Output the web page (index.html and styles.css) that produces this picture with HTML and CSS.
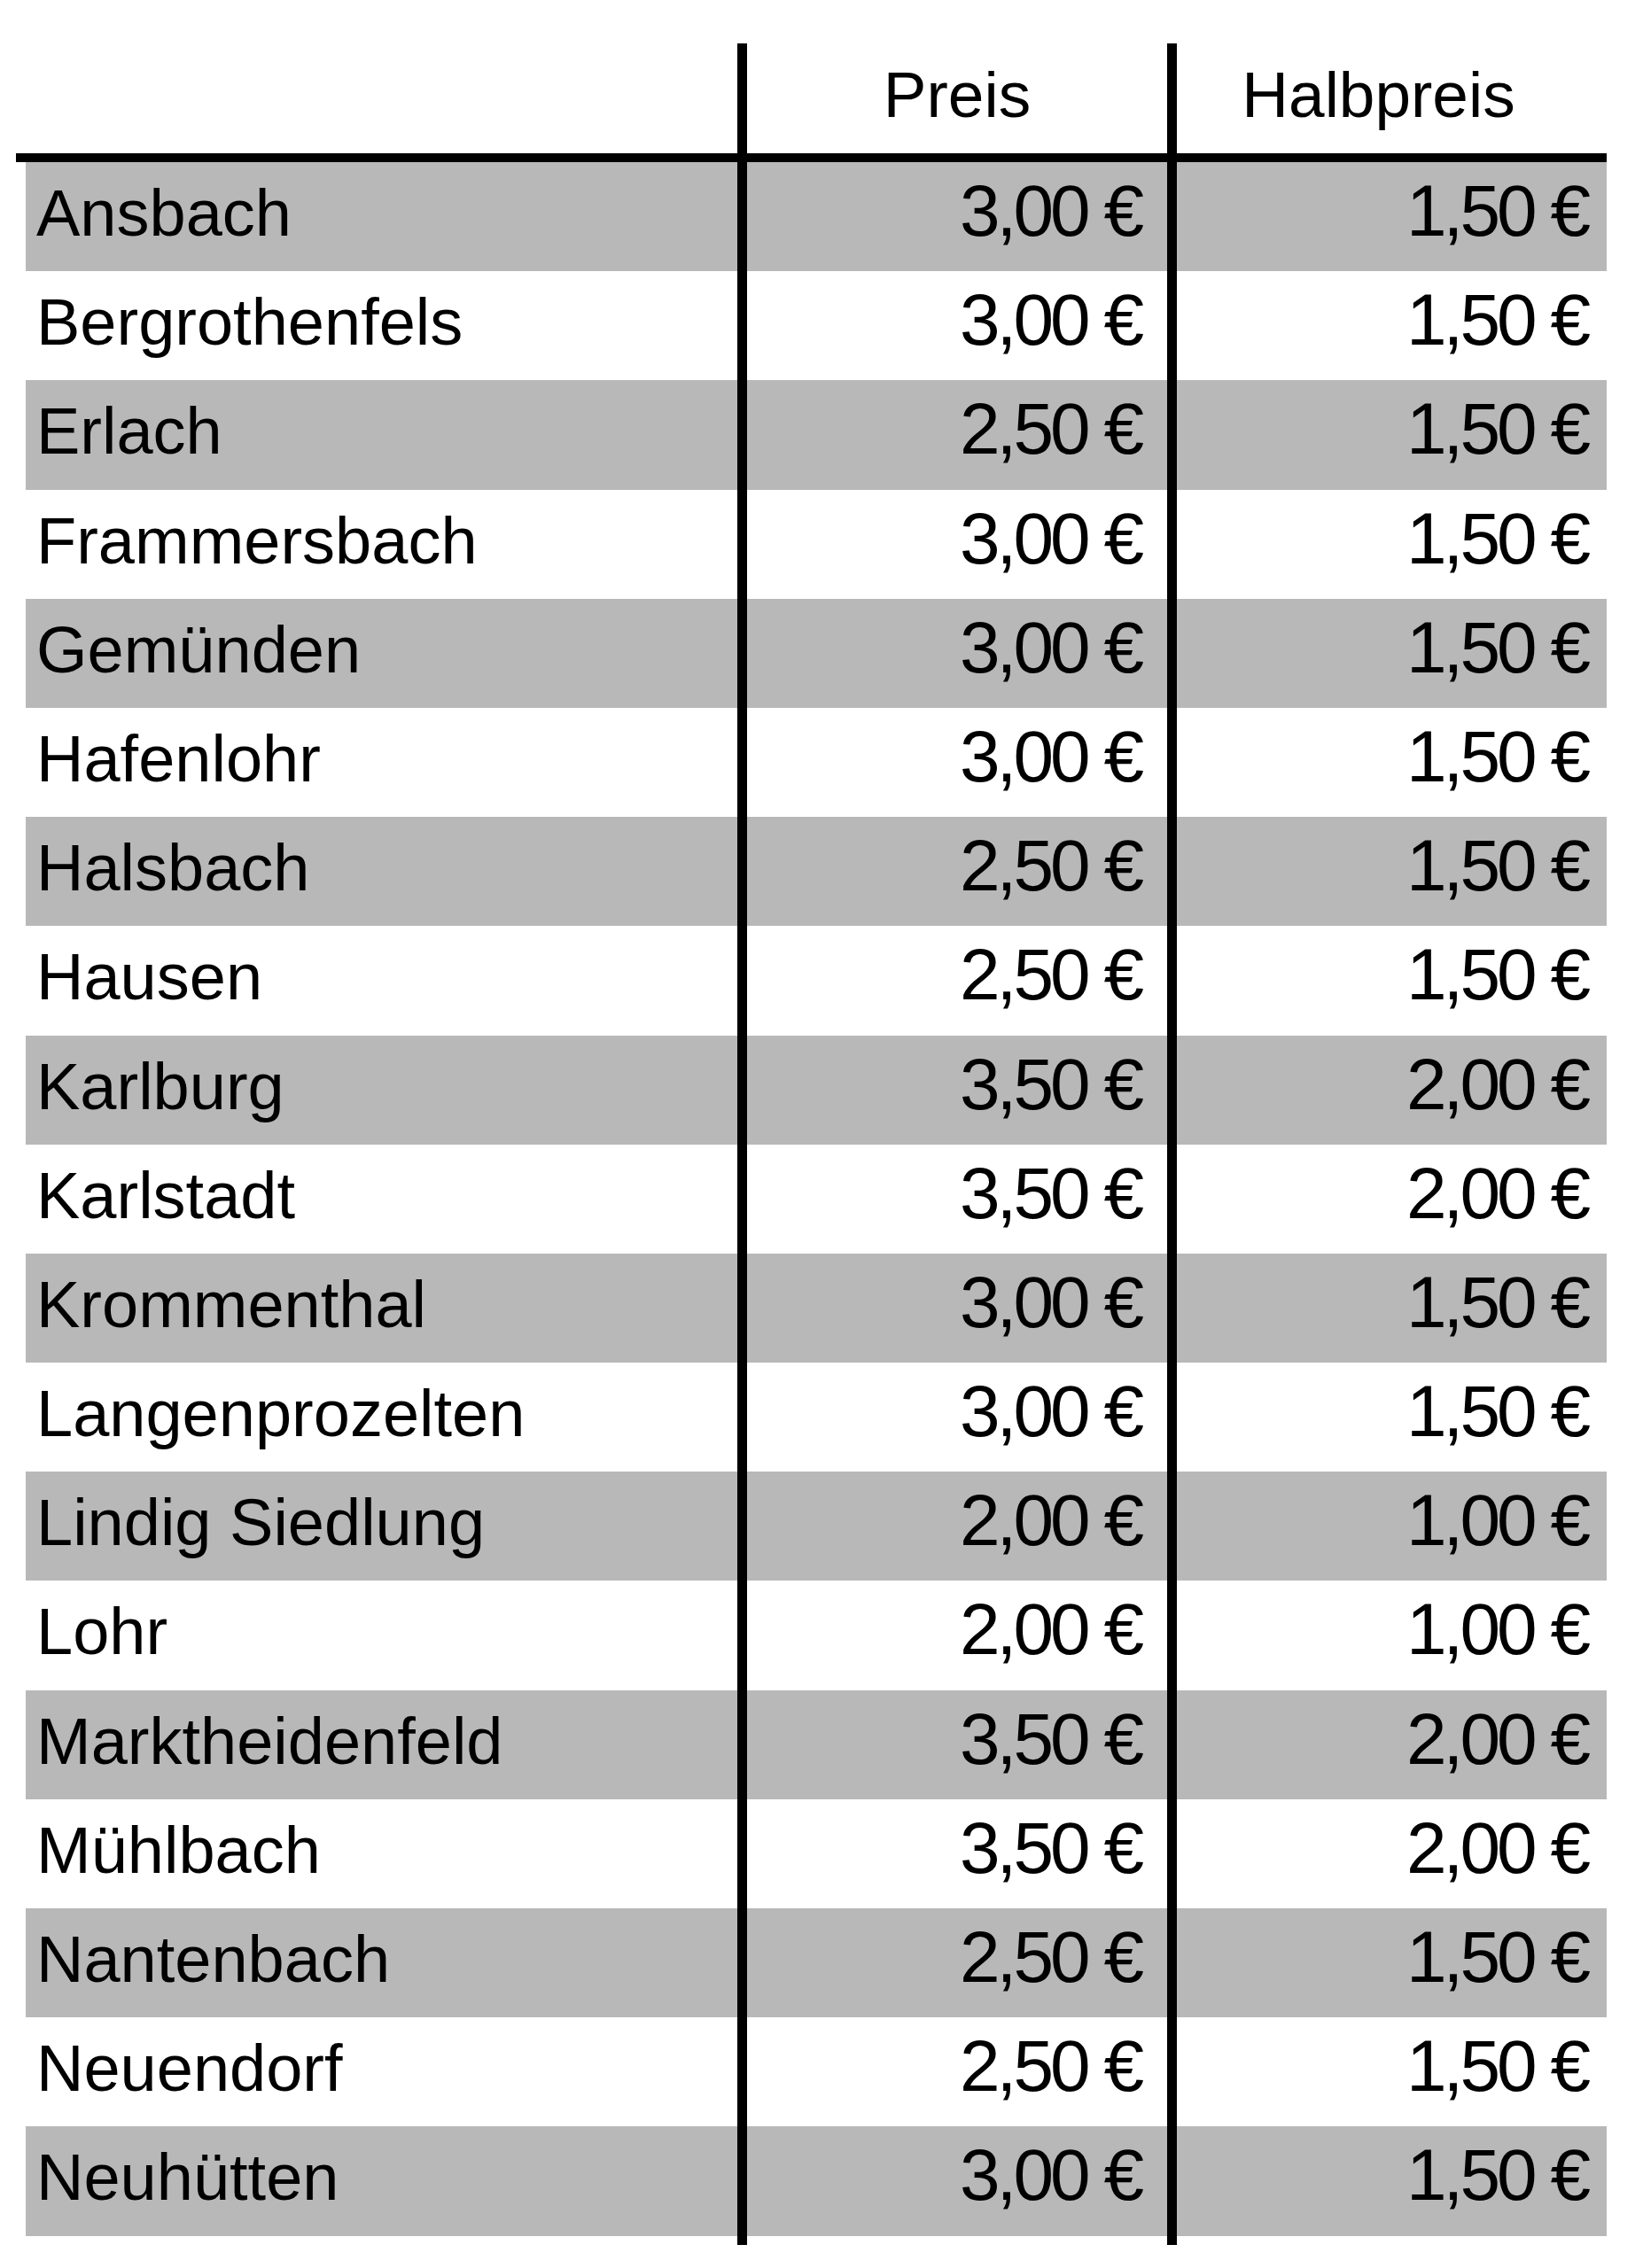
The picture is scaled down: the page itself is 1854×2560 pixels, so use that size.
FILE: index.html
```html
<!DOCTYPE html>
<html lang="de">
<head>
<meta charset="utf-8">
<title>Preise</title>
<link rel="stylesheet" href="styles.css">
</head>
<body>
<div class="table">
  <div class="head">
    <div class="cell name"></div>
    <div class="cell hcol hp">Preis</div>
    <div class="cell hcol hh">Halbpreis</div>
  </div>
  <div class="row gray"><div class="cell name">Ansbach</div><div class="cell price p1">3,00 €</div><div class="cell price p2">1,50 €</div></div>
  <div class="row"><div class="cell name">Bergrothenfels</div><div class="cell price p1">3,00 €</div><div class="cell price p2">1,50 €</div></div>
  <div class="row gray"><div class="cell name">Erlach</div><div class="cell price p1">2,50 €</div><div class="cell price p2">1,50 €</div></div>
  <div class="row"><div class="cell name">Frammersbach</div><div class="cell price p1">3,00 €</div><div class="cell price p2">1,50 €</div></div>
  <div class="row gray"><div class="cell name">Gemünden</div><div class="cell price p1">3,00 €</div><div class="cell price p2">1,50 €</div></div>
  <div class="row"><div class="cell name">Hafenlohr</div><div class="cell price p1">3,00 €</div><div class="cell price p2">1,50 €</div></div>
  <div class="row gray"><div class="cell name">Halsbach</div><div class="cell price p1">2,50 €</div><div class="cell price p2">1,50 €</div></div>
  <div class="row"><div class="cell name">Hausen</div><div class="cell price p1">2,50 €</div><div class="cell price p2">1,50 €</div></div>
  <div class="row gray"><div class="cell name">Karlburg</div><div class="cell price p1">3,50 €</div><div class="cell price p2">2,00 €</div></div>
  <div class="row"><div class="cell name">Karlstadt</div><div class="cell price p1">3,50 €</div><div class="cell price p2">2,00 €</div></div>
  <div class="row gray"><div class="cell name">Krommenthal</div><div class="cell price p1">3,00 €</div><div class="cell price p2">1,50 €</div></div>
  <div class="row"><div class="cell name">Langenprozelten</div><div class="cell price p1">3,00 €</div><div class="cell price p2">1,50 €</div></div>
  <div class="row gray"><div class="cell name">Lindig Siedlung</div><div class="cell price p1">2,00 €</div><div class="cell price p2">1,00 €</div></div>
  <div class="row"><div class="cell name">Lohr</div><div class="cell price p1">2,00 €</div><div class="cell price p2">1,00 €</div></div>
  <div class="row gray"><div class="cell name">Marktheidenfeld</div><div class="cell price p1">3,50 €</div><div class="cell price p2">2,00 €</div></div>
  <div class="row"><div class="cell name">Mühlbach</div><div class="cell price p1">3,50 €</div><div class="cell price p2">2,00 €</div></div>
  <div class="row gray"><div class="cell name">Nantenbach</div><div class="cell price p1">2,50 €</div><div class="cell price p2">1,50 €</div></div>
  <div class="row"><div class="cell name">Neuendorf</div><div class="cell price p1">2,50 €</div><div class="cell price p2">1,50 €</div></div>
  <div class="row gray"><div class="cell name">Neuhütten</div><div class="cell price p1">3,00 €</div><div class="cell price p2">1,50 €</div></div>
  <div class="row tail"><div class="cell"></div><div class="cell line"></div><div class="cell line"></div></div>
</div>
</body>
</html>
```
FILE: styles.css
```css
html, body {
  margin: 0;
  padding: 0;
  background: #ffffff;
}

body {
  font-family: "Liberation Sans", Arial, sans-serif;
  color: #000000;
}

.table {
  margin: 49px 0 0 18px;
  width: 1795px;
}

.head {
  display: grid;
  grid-template-columns: 814px 485px 496px;
  height: 124px;
  border-bottom: 10px solid #000;
}

.hcol {
  border-left: 11px solid #000;
  text-align: center;
  font-size: 73px;
  line-height: 115px;
  padding-bottom: 9px;
  white-space: nowrap;
}

.hh {
  padding-right: 30px;
}

.row {
  display: grid;
  grid-template-columns: 803px 485px 496px;
  margin-left: 11px;
  height: 123.2px;
}

.row.gray {
  background: #b8b8b8;
}

.row .cell + .cell {
  border-left: 11px solid #000;
}

.name {
  font-size: 74px;
  line-height: 115px;
  padding: 0 0 8px 12px;
  white-space: nowrap;
}

.price {
  font-size: 82px;
  line-height: 109px;
  padding-bottom: 14px;
  letter-spacing: -4px;
  text-align: right;
  white-space: nowrap;
}

.p1 {
  padding-right: 30px;
}

.p2 {
  padding-right: 22px;
}

.row.tail {
  height: 10px;
  background: transparent;
}
```
